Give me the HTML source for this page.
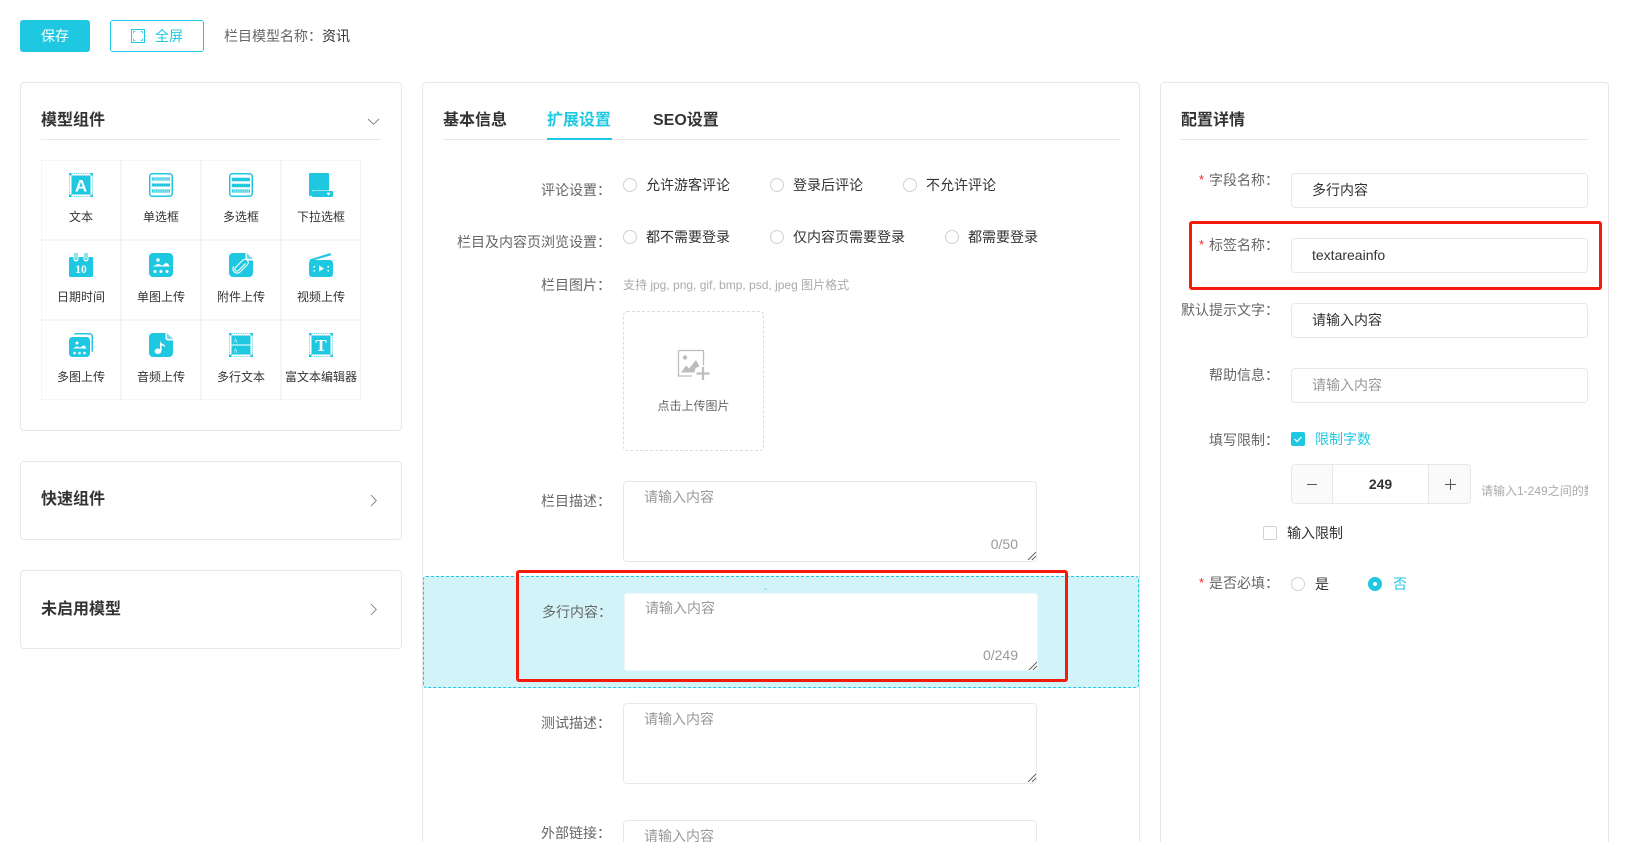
<!DOCTYPE html>
<html lang="zh">
<head>
<meta charset="utf-8">
<title>栏目模型</title>
<style>
*{box-sizing:border-box;margin:0;padding:0}
html,body{width:1637px;height:842px;overflow:hidden;background:#fff}
body{position:relative;font-family:"Liberation Sans","Noto Sans CJK SC",sans-serif;font-size:14px;color:#333}
.a{position:absolute}
.t{position:absolute;white-space:nowrap;line-height:20px;height:20px}
.panel{position:absolute;background:#fff;border:1px solid #e8e8e8;border-radius:4px}
.title{font-size:16px;font-weight:700;color:#333;line-height:24px;height:24px}
.hr{position:absolute;height:1px;background:#e8e8e8}
.lbl{color:#666;text-align:right}
.ml{left:511px;width:100px}
.rl{left:1159px;width:120px}
.star{position:absolute;color:#f5222d;font-size:13px;line-height:20px;height:20px}
.cell{position:absolute;width:80px;height:80px;border:1px solid #f5f5f5}
.cell svg{position:absolute;left:27px;top:12px;width:24px;height:24px}
.cell span{position:absolute;left:0;right:0;top:46px;text-align:center;font-size:12px;line-height:20px;color:#333;white-space:nowrap}
.radio{position:absolute;width:14px;height:14px;border:1px solid #d0d0d0;border-radius:50%;background:#fff}
.box{position:absolute;border:1px solid #e8e8e8;border-radius:4px;background:#fff}
.grip{position:absolute;width:9px;height:9px}
.fld{position:absolute;left:1291px;width:297px;height:35px;border:1px solid #e8e8e8;border-radius:4px;background:#fff;padding-left:20px;line-height:33px;color:#333;white-space:nowrap}
</style>
</head>
<body>

<div class="a" style="left:20px;top:20px;width:70px;height:32px;background:#1fc8e1;border-radius:3px;color:#fff;text-align:center;line-height:32px">保存</div>
<div class="a" style="left:110px;top:20px;width:94px;height:32px;border:1px solid #1fc8e1;border-radius:3px"></div>
<svg class="a" style="left:131px;top:29px" width="14" height="14" viewBox="0 0 14 14" fill="none"><rect x=".5" y=".5" width="13" height="13" stroke="#1fc8e1"/><path d="M2.500 4.500v-2h2M9.500 2.500h2v2M11.500 9.500v2h-2M4.500 11.500h-2v-2" stroke="#1fc8e1" stroke-opacity=".7"/></svg>
<div class="t" style="left:155px;top:26px;color:#1fc8e1">全屏</div>
<div class="t" style="left:224px;top:26px;color:#666">栏目模型名称：<span style="color:#333">资讯</span></div>

<!-- left column -->
<div class="panel" style="left:20px;top:82px;width:382px;height:349px"></div>
<div class="t title" style="left:41px;top:109px">模型组件</div>
<svg class="a" style="left:367px;top:118px" width="13" height="8" viewBox="0 0 13 8" fill="none"><path d="M1 1l5.500 5.300L12 1" stroke="#777" stroke-width=".9"/></svg>
<div class="hr" style="left:41px;top:139px;width:340px"></div>

<div class="cell" style="left:41px;top:160px"><svg viewBox="0 0 24 24"><rect x="2.500" y="2.500" width="19" height="19" fill="#1fc8e1"/><rect x=".5" y=".5" width="23" height="23" fill="none" stroke="#1fc8e1" stroke-dasharray="1 1.200" stroke-opacity=".8"/><path d="M0 0h2.500v2.500H0zM21.500 0H24v2.500h-2.500zM0 21.500h2.500V24H0zM21.500 21.500H24V24h-2.500z" fill="#1fc8e1"/><text x="12" y="18.300" text-anchor="middle" font-family="Liberation Sans" font-weight="700" font-size="17" fill="#fff">A</text></svg><span>文本</span></div>

<div class="cell" style="left:121px;top:160px"><svg viewBox="0 0 24 24" fill="none"><rect x=".75" y=".75" width="22.500" height="22.500" rx="2.500" stroke="#1fc8e1" stroke-width="1.500"/><path d="M3 6h18M3 18h18" stroke="#1fc8e1" stroke-width="3"/><path d="M3 12h18" stroke="#1fc8e1" stroke-width="3"/><path d="M4 6h16M4 18h16" stroke="#fff" stroke-width="1" stroke-dasharray="1.400 .7"/></svg><span>单选框</span></div>

<div class="cell" style="left:201px;top:160px"><svg viewBox="0 0 24 24" fill="none"><rect x=".75" y=".75" width="22.500" height="22.500" rx="2.500" stroke="#1fc8e1" stroke-width="1.500"/><path d="M3 6.500h18M3 12.500h18" stroke="#1fc8e1" stroke-width="3.400"/><path d="M3 18h18" stroke="#1fc8e1" stroke-width="3"/><path d="M4 18h16" stroke="#fff" stroke-width="1" stroke-dasharray="1.400 .7"/></svg><span>多选框</span></div>

<div class="cell" style="left:281px;top:160px"><svg viewBox="0 0 24 24"><rect width="20" height="17.500" rx="1" fill="#1fc8e1"/><rect width="3" height="23" rx="1" fill="#1fc8e1"/><rect x="3" y="18" width="21" height="6" rx="1" fill="#1fc8e1"/><path d="M17.500 19.800h4l-2 2.800z" fill="#fff"/></svg><span>下拉选框</span></div>

<div class="cell" style="left:41px;top:240px"><svg viewBox="0 0 24 24"><path d="M1 4h3.500v2a2.500 2.500 0 005 0V4h5v2a2.500 2.500 0 005 0V4H23a1 1 0 011 1v18a1 1 0 01-1 1H1a1 1 0 01-1-1V5a1 1 0 011-1z" fill="#1fc8e1"/><path d="M6 0v5.500a1 1 0 002 0V0M16 0v5.500a1 1 0 002 0V0" stroke="#1fc8e1" stroke-width="1" fill="none"/><text x="12" y="20" text-anchor="middle" font-family="Liberation Serif" font-weight="700" font-size="11.500" fill="#fff">10</text></svg><span>日期时间</span></div>

<div class="cell" style="left:121px;top:240px"><svg viewBox="0 0 24 24"><rect width="24" height="24" rx="4" fill="#1fc8e1"/><circle cx="9" cy="7" r="1.700" fill="#fff"/><path d="M3.500 13.500c2-.3 3.500-2.500 5.500-2.500s2.500 1.500 4 1.500 2.500-2.500 4.500-2.500 2 2.300 3.500 3.500z" fill="#fff"/><circle cx="6" cy="18.500" r="1.500" fill="#fff"/><circle cx="12" cy="18.500" r="1.500" fill="#fff"/><circle cx="18" cy="18.500" r="1.500" fill="#fff"/></svg><span>单图上传</span></div>

<div class="cell" style="left:201px;top:240px"><svg viewBox="0 0 24 24"><path d="M4 0h12.500v5a2.500 2.500 0 002.500 2.500h5V20a4 4 0 01-4 4H4a4 4 0 01-4-4V4a4 4 0 014-4z" fill="#1fc8e1"/><path d="M17.800 0L24 6h-5a1.200 1.200 0 01-1.200-1.200z" fill="#1fc8e1" opacity=".65"/><path d="M16.500 10.500l-7 7a2 2 0 01-3-3l7.500-7.500a3.200 3.200 0 014.500 4.500l-7.800 7.800a4.300 4.300 0 01-6-6" fill="none" stroke="#fff" stroke-width="1.100"/></svg><span>附件上传</span></div>

<div class="cell" style="left:281px;top:240px"><svg viewBox="0 0 24 24"><rect y="7" width="24" height="17" rx="3" fill="#1fc8e1"/><path d="M.5 6.500L21.500 0l.7 2.300-21 6z" fill="#1fc8e1"/><path d="M10 12.500l5 3-5 3z" fill="#fff"/><path d="M4.500 13h1.500v1.500H4.500zM4.500 17h1.500v1.500H4.500zM18.500 13H20v1.500h-1.500zM18.500 17H20v1.500h-1.500z" fill="#fff"/></svg><span>视频上传</span></div>

<div class="cell" style="left:41px;top:320px"><svg viewBox="0 0 24 24"><path d="M5 1.500A1.500 1.500 0 016.500 0H21a3 3 0 013 3v14.500a1.500 1.500 0 01-1.500 1.500V3a1.500 1.500 0 00-1.500-1.500z" fill="#1fc8e1"/><rect y="4" width="21" height="20" rx="3.500" fill="#1fc8e1"/><circle cx="8" cy="10" r="1.500" fill="#fff"/><path d="M3.500 15.500c1.800-.3 3-2 4.500-2s2 1 3.200 1 2-2 3.500-2 1.800 2 3 3z" fill="#fff"/><circle cx="5.500" cy="20" r="1.300" fill="#fff"/><circle cx="10.500" cy="20" r="1.300" fill="#fff"/><circle cx="15.500" cy="20" r="1.300" fill="#fff"/></svg><span>多图上传</span></div>

<div class="cell" style="left:121px;top:320px"><svg viewBox="0 0 24 24"><path d="M4 0h12.500v5a2.500 2.500 0 002.500 2.500h5V20a4 4 0 01-4 4H4a4 4 0 01-4-4V4a4 4 0 014-4z" fill="#1fc8e1"/><path d="M17.800 0L24 6h-5a1.200 1.200 0 01-1.200-1.200z" fill="#1fc8e1" opacity=".65"/><ellipse cx="9" cy="18.200" rx="3.300" ry="2.700" fill="#fff"/><path d="M11 18V7.500c.5 2.500 2 3 3.500 3.800s1.800 1.800 1.300 3.200c-.3-1.500-2-2-3.200-2.300V18z" fill="#fff"/></svg><span>音频上传</span></div>

<div class="cell" style="left:201px;top:320px"><svg viewBox="0 0 24 24"><rect x=".5" y=".5" width="23" height="23" fill="none" stroke="#1fc8e1" stroke-dasharray="1 1.200" stroke-opacity=".8"/><path d="M0 0h2.500v2.500H0zM21.500 0H24v2.500h-2.500zM0 21.500h2.500V24H0zM21.500 21.500H24V24h-2.500z" fill="#1fc8e1"/><rect x="2.500" y="2.500" width="19" height="9" fill="#1fc8e1"/><rect x="2.500" y="12.500" width="19" height="9" fill="#1fc8e1"/><text x="6.500" y="9.500" text-anchor="middle" font-family="Liberation Serif" font-size="6.500" fill="#fff">A</text><text x="6.500" y="19.500" text-anchor="middle" font-family="Liberation Serif" font-size="6.500" fill="#fff">A</text></svg><span>多行文本</span></div>

<div class="cell" style="left:281px;top:320px"><svg viewBox="0 0 24 24"><rect x="2.500" y="2.500" width="19" height="19" fill="#1fc8e1"/><rect x=".5" y=".5" width="23" height="23" fill="none" stroke="#1fc8e1" stroke-dasharray="1 1.200" stroke-opacity=".8"/><path d="M0 0h2.500v2.500H0zM21.500 0H24v2.500h-2.500zM0 21.500h2.500V24H0zM21.500 21.500H24V24h-2.500z" fill="#1fc8e1"/><text x="12" y="18" text-anchor="middle" font-family="Liberation Serif" font-weight="700" font-size="17" fill="#fff">T</text></svg><span>富文本编辑器</span></div>

<div class="panel" style="left:20px;top:461px;width:382px;height:79px"></div>
<div class="t title" style="left:41px;top:488px">快速组件</div>
<svg class="a" style="left:370px;top:494px" width="8" height="13" viewBox="0 0 8 13" fill="none"><path d="M1 1l5.300 5.500L1 12" stroke="#777" stroke-width=".9"/></svg>

<div class="panel" style="left:20px;top:570px;width:382px;height:79px"></div>
<div class="t title" style="left:41px;top:598px">未启用模型</div>
<svg class="a" style="left:370px;top:603px" width="8" height="13" viewBox="0 0 8 13" fill="none"><path d="M1 1l5.300 5.500L1 12" stroke="#777" stroke-width=".9"/></svg>

<!-- middle column -->
<div class="panel" style="left:422px;top:82px;width:718px;height:790px"></div>
<div class="t title" style="left:443px;top:109px">基本信息</div>
<div class="t title" style="left:547px;top:109px;color:#1fc8e1">扩展设置</div>
<div class="t title" style="left:653px;top:109px">SEO设置</div>
<div class="hr" style="left:443px;top:139px;width:677px"></div>
<div class="a" style="left:547px;top:138px;width:65px;height:2px;background:#1fc8e1"></div>

<div class="t lbl ml" style="top:180px">评论设置：</div>
<div class="radio" style="left:623px;top:178px"></div><div class="t" style="left:646px;top:175px">允许游客评论</div>
<div class="radio" style="left:770px;top:178px"></div><div class="t" style="left:793px;top:175px">登录后评论</div>
<div class="radio" style="left:903px;top:178px"></div><div class="t" style="left:926px;top:175px">不允许评论</div>

<div class="t lbl" style="left:431px;width:180px;top:232px">栏目及内容页浏览设置：</div>
<div class="radio" style="left:623px;top:230px"></div><div class="t" style="left:646px;top:227px">都不需要登录</div>
<div class="radio" style="left:770px;top:230px"></div><div class="t" style="left:793px;top:227px">仅内容页需要登录</div>
<div class="radio" style="left:945px;top:230px"></div><div class="t" style="left:968px;top:227px">都需要登录</div>

<div class="t lbl ml" style="top:275px">栏目图片：</div>
<div class="t" style="left:623px;top:275px;font-size:12px;color:#aaa">支持 jpg, png, gif, bmp, psd, jpeg 图片格式</div>
<div class="a" style="left:623px;top:311px;width:141px;height:140px;border:1px dashed #dcdcdc;border-radius:4px"></div>
<svg class="a" style="left:677px;top:349px" width="33" height="32" viewBox="0 0 33 32"><path d="M1.500 1.500h25v15M15 27H1.500V1.500" fill="none" stroke="#bdbdbd" stroke-width="1.300"/><circle cx="8" cy="8.500" r="2.200" fill="#bdbdbd"/><path d="M4 23.500l5-7 3 3 7-8.500 3.500 6.500-4 1.500-1 4.500z" fill="#bdbdbd"/><path d="M26 18v13M19.500 24.500h13" stroke="#bdbdbd" stroke-width="2.200"/></svg>
<div class="t" style="left:623px;width:141px;text-align:center;top:396px;font-size:12px;color:#666">点击上传图片</div>

<div class="t lbl ml" style="top:491px">栏目描述：</div>
<div class="box" style="left:623px;top:481px;width:414px;height:81px"></div>
<div class="t" style="left:644px;top:487px;color:#999">请输入内容</div>
<div class="t" style="left:958px;width:60px;text-align:right;top:534px;color:#999">0/50</div>
<svg class="grip" style="left:1027px;top:551px" viewBox="0 0 9 9"><path d="M1 9L9 1M5 9l4-4" stroke="#555" stroke-width=".9"/></svg>

<div class="a" style="left:423px;top:576px;width:716px;height:112px;background:#d2f3f8;border:1px dashed #1fc8e1;border-radius:3px"></div>
<div class="a" style="left:764px;top:588px;width:3px;height:2px;background:#a6e8f2"></div>
<div class="t lbl" style="left:512px;width:100px;top:602px">多行内容：</div>
<div class="a" style="left:624px;top:593px;width:414px;height:78px;background:#fff;border:1px solid #eef6f7;border-radius:3px"></div>
<div class="t" style="left:645px;top:598px;color:#999">请输入内容</div>
<div class="t" style="left:958px;width:60px;text-align:right;top:645px;color:#999">0/249</div>
<svg class="grip" style="left:1028px;top:661px" viewBox="0 0 9 9"><path d="M1 9L9 1M5 9l4-4" stroke="#555" stroke-width=".9"/></svg>
<div class="a" style="left:516px;top:570px;width:552px;height:112px;border:3px solid #f5190e;border-radius:3px"></div>

<div class="t lbl ml" style="top:713px">测试描述：</div>
<div class="box" style="left:623px;top:703px;width:414px;height:81px"></div>
<div class="t" style="left:644px;top:709px;color:#999">请输入内容</div>
<svg class="grip" style="left:1027px;top:773px" viewBox="0 0 9 9"><path d="M1 9L9 1M5 9l4-4" stroke="#555" stroke-width=".9"/></svg>

<div class="t lbl ml" style="top:823px">外部链接：</div>
<div class="box" style="left:623px;top:820px;width:414px;height:60px"></div>
<div class="t" style="left:644px;top:826px;color:#999">请输入内容</div>

<!-- right column -->
<div class="panel" style="left:1160px;top:82px;width:449px;height:790px"></div>
<div class="t title" style="left:1181px;top:109px">配置详情</div>
<div class="hr" style="left:1181px;top:139px;width:407px"></div>

<div class="star" style="left:1199px;top:170px">*</div>
<div class="t lbl rl" style="top:170px">字段名称：</div>
<div class="fld" style="top:173px">多行内容</div>

<div class="star" style="left:1199px;top:235px">*</div>
<div class="t lbl rl" style="top:235px">标签名称：</div>
<div class="fld" style="top:238px">textareainfo</div>
<div class="a" style="left:1189px;top:221px;width:413px;height:69px;border:3px solid #f5190e;border-radius:3px"></div>

<div class="t lbl rl" style="top:300px">默认提示文字：</div>
<div class="fld" style="top:303px">请输入内容</div>

<div class="t lbl rl" style="top:365px">帮助信息：</div>
<div class="fld" style="top:368px;color:#999">请输入内容</div>

<div class="t lbl rl" style="top:430px">填写限制：</div>
<div class="a" style="left:1291px;top:432px;width:14px;height:14px;background:#1fc8e1;border-radius:2px"></div>
<svg class="a" style="left:1291px;top:432px" width="14" height="14" viewBox="0 0 14 14" fill="none"><path d="M3.500 7l2.500 2.500 4.500-4.500" stroke="#fff" stroke-width="1.200"/></svg>
<div class="t" style="left:1315px;top:429px;color:#1fc8e1">限制字数</div>

<div class="a" style="left:1291px;top:464px;width:180px;height:40px;border:1px solid #e8e8e8;border-radius:4px;background:#fafafa"></div>
<div class="a" style="left:1332px;top:465px;width:97px;height:38px;background:#fff;border-left:1px solid #e8e8e8;border-right:1px solid #e8e8e8"></div>
<div class="a" style="left:1307px;top:484px;width:10px;height:1px;background:#555"></div>
<div class="a" style="left:1445px;top:484px;width:11px;height:1px;background:#555"></div>
<div class="a" style="left:1450px;top:479px;width:1px;height:11px;background:#555"></div>
<div class="t" style="left:1332px;width:97px;text-align:center;top:474px;font-weight:700;color:#333">249</div>
<div class="a" style="left:1481px;top:481px;width:107px;height:20px;overflow:hidden"><div style="white-space:nowrap;font-size:12px;line-height:20px;color:#aaa">请输入1-249之间的数字</div></div>

<div class="a" style="left:1263px;top:526px;width:14px;height:14px;background:#fff;border:1px solid #d0d0d0;border-radius:2px"></div>
<div class="t" style="left:1287px;top:523px">输入限制</div>

<div class="star" style="left:1199px;top:573px">*</div>
<div class="t lbl rl" style="top:573px">是否必填：</div>
<div class="radio" style="left:1291px;top:577px"></div>
<div class="t" style="left:1315px;top:574px">是</div>
<div class="a" style="left:1368px;top:577px;width:14px;height:14px;border-radius:50%;background:#1fc8e1"></div>
<div class="a" style="left:1373px;top:582px;width:4px;height:4px;border-radius:50%;background:#fff"></div>
<div class="t" style="left:1393px;top:574px;color:#1fc8e1">否</div>

</body>
</html>
